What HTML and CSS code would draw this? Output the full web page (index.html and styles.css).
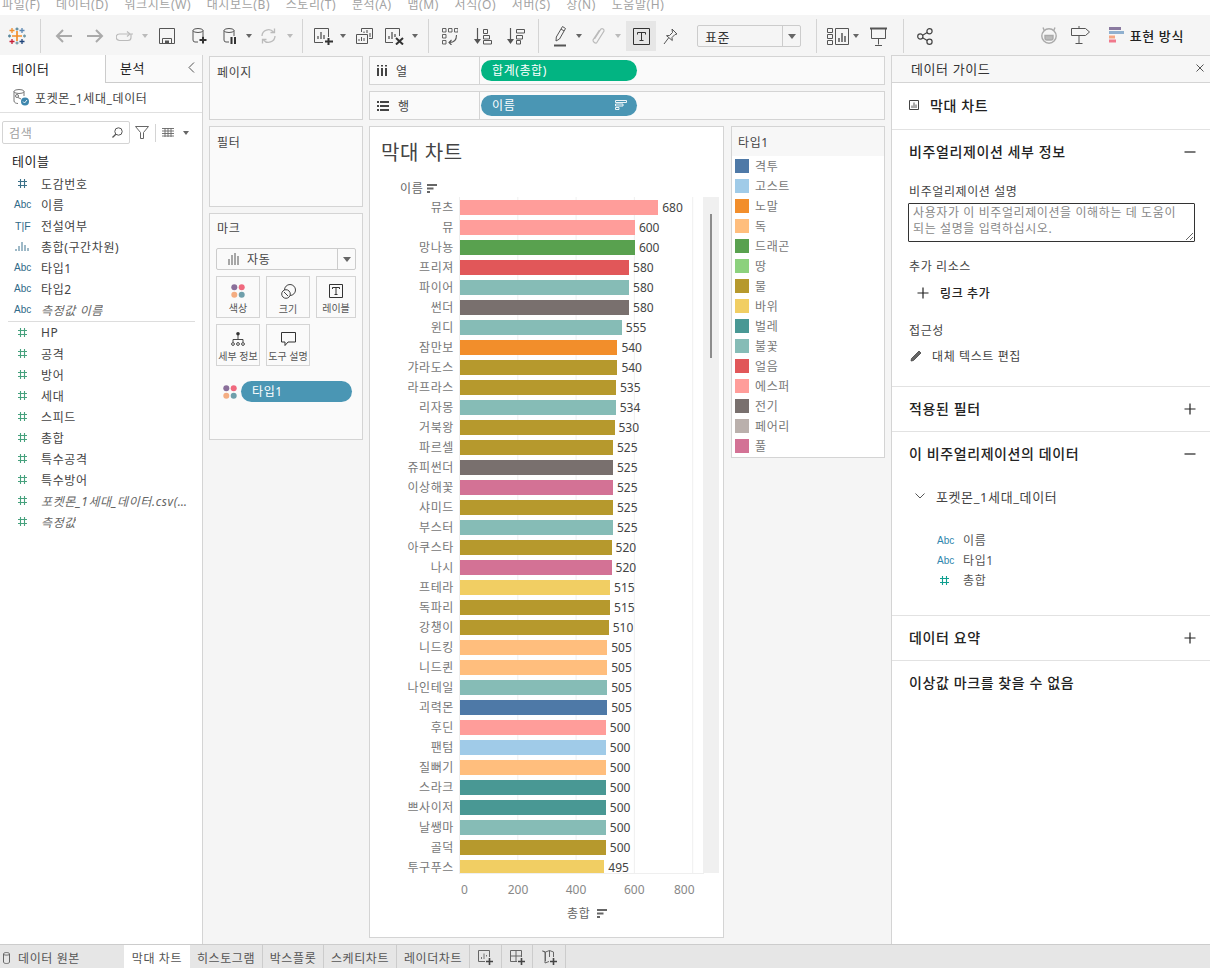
FILE: index.html
```html
<!DOCTYPE html>
<html lang="ko">
<head>
  <meta charset="UTF-8">
  <meta name="viewport" content="width=device-width, initial-scale=1.0">
  <title>막대 차트</title>
  <link rel="stylesheet" href="styles.css">
</head>
<body>
  <svg class="defs" aria-hidden="true">
    <symbol id="i-sort" viewBox="0 0 10 9"><path d="M0 1h10M0 4.500h6.500M0 8h3" fill="none" stroke="currentColor" stroke-width="1.800"/></symbol>
    <symbol id="i-hash" viewBox="0 0 11 11"><path d="M3.500 1v9M7.500 1v9M1 3.500h9M1 7.500h9" fill="none" stroke="currentColor" stroke-width="1.100"/></symbol>
    <symbol id="i-dots" viewBox="0 0 14 14"><circle cx="3.300" cy="3.300" r="3" fill="#8a6f9a"/><circle cx="10.700" cy="3.300" r="3" fill="#f0697e"/><circle cx="3.300" cy="10.700" r="3" fill="#f4ad82"/><circle cx="10.700" cy="10.700" r="3" fill="#6f9fab"/></symbol>
    <symbol id="i-plus" viewBox="0 0 12 12"><path d="M6 .500v11M.500 6h11" fill="none" stroke="currentColor" stroke-width="1.200"/></symbol>
    <symbol id="i-minus" viewBox="0 0 12 12"><path d="M.500 6h11" fill="none" stroke="currentColor" stroke-width="1.200"/></symbol>
  </svg>

  <div class="menubar">
    <span>파일(F)</span><span>데이터(D)</span><span>워크시트(W)</span><span>대시보드(B)</span><span>스토리(T)</span><span>분석(A)</span><span>맵(M)</span><span>서식(O)</span><span>서버(S)</span><span>창(N)</span><span>도움말(H)</span>
  </div>

  <div class="toolbar">
    <div class="tb-group tb-logo">
      <svg width="18" height="18" viewBox="0 0 18 18" fill="none" stroke-width="1.300">
        <path d="M9 4v10M4 9h10" stroke="#f28e2b" stroke-width="1.700"/>
        <path d="M4 1v5M1.500 3.500h5" stroke="#f28e2b"/>
        <path d="M14 1v5M11.500 3.500h5" stroke="#5b87b2"/>
        <path d="M9 .500v3M7.500 2h3" stroke="#59879b"/>
        <path d="M4 12v5M1.500 14.500h5" stroke="#c72037"/>
        <path d="M14 12v5M11.500 14.500h5" stroke="#1f447a"/>
        <path d="M9 14.500v3M7.500 16h3" stroke="#7199a6"/>
        <path d="M1.500 7.500v3M0 9h3" stroke="#59879b"/>
        <path d="M16.500 7.500v3M15 9h3" stroke="#7199a6"/>
      </svg>
    </div>
    <div class="tb-group g-file">
      <span class="tb w32"><svg width="17" height="14" viewBox="0 0 17 14" fill="none" stroke="#aaa" stroke-width="2"><path d="M17 7H2M8 1 2 7l6 6"/></svg></span>
      <span class="tb w32"><svg width="17" height="14" viewBox="0 0 17 14" fill="none" stroke="#aaa" stroke-width="2"><path d="M0 7h15M9 1l6 6-6 6"/></svg></span>
      <span class="tb w28"><svg width="18" height="11" viewBox="0 0 18 11" fill="none" stroke="#bbb" stroke-width="1.200"><path d="M13 3H3.500a2.800 2.800 0 0 0 0 6.500H12a3 3 0 0 0 3-3V3"/><path d="M11 .500 14 3l-3 2.500M11 .500 14 3l3 0" /></svg></span>
      <span class="tb w12"><i class="caret soft"></i></span>
      <span class="tb w32"><svg width="16" height="16" viewBox="0 0 16 16" fill="none" stroke="#555"><path d="M.500.500h15v15H.500z"/><path d="M3.500 15.500v-5h9v5"/><path d="M6 12.500h4v3H6z" fill="#555" stroke="none"/></svg></span>
      <span class="tb w32"><svg width="15" height="16" viewBox="0 0 15 16" fill="none" stroke="#555"><ellipse cx="6" cy="2.500" rx="5" ry="2"/><path d="M1 2.500v9.500a2 2 0 0 0 2 2h3M11 2.500V8"/><path d="M11 8.500v7M7.500 12h7" stroke="#333" stroke-width="2"/></svg></span>
      <span class="tb w30"><svg width="14" height="16" viewBox="0 0 14 16" fill="none" stroke="#555"><ellipse cx="6" cy="2.500" rx="5" ry="2"/><path d="M1 2.500v9.500a2 2 0 0 0 2 2h3M11 2.500V8"/><path d="M8.500 9v7M12 9v7" stroke="#333" stroke-width="2"/></svg></span>
      <span class="tb w8"><i class="caret"></i></span>
      <span class="tb w30"><svg width="17" height="16" viewBox="0 0 17 16" fill="none" stroke="#bbb" stroke-width="1.300"><path d="M2 8a6.500 6.500 0 0 1 11.500-4M15 8A6.500 6.500 0 0 1 3.500 12"/><path d="M14.500.500v4h-4M2.500 15.500v-4h4"/></svg></span>
      <span class="tb w14"><i class="caret soft"></i></span>
    </div>
    <div class="tb-group g-sheet">
      <span class="tb w28"><svg width="19" height="17" viewBox="0 0 19 17" fill="none" stroke="#555"><path d="M9 14.500H.500V.500h14V9"/><path d="M4 11V8M7 11V4M10 11V7" stroke-width="1.300"/><path d="M14.500 10v7M11 13.500h8" stroke="#333" stroke-width="2"/></svg></span>
      <span class="tb w12"><i class="caret"></i></span>
      <span class="tb w31"><svg width="17" height="16" viewBox="0 0 17 16" fill="none" stroke="#555"><path d="M5.500 4V.500h11v10H13"/><path d="M.500 6.500h11v9H.500z" fill="#f5f5f5"/><path d="M8 5V3.500M11 5V2M14 9V5" stroke-width="1.100"/><path d="M3 13v-2M5.500 13V9M8 13v-3" stroke-width="1"/></svg></span>
      <span class="tb w29"><svg width="19" height="17" viewBox="0 0 19 17" fill="none" stroke="#555"><path d="M8 14.500H.500V.500h14V8"/><path d="M4 11V8M7 11V4M10 9V6" stroke-width="1.300"/><path d="m11 10 7 6.500M18 10l-7 6.500" stroke="#333" stroke-width="2"/></svg></span>
      <span class="tb w12"><i class="caret"></i></span>
    </div>
    <div class="tb-group g-sort">
      <span class="tb w30"><svg width="16" height="17" viewBox="0 0 16 17" fill="none" stroke="#555"><path d="M.500.500h3.500v3.500H.500zM6.500.500H10v3.500H6.500zM12.500.500H16v3.500h-3.500zM.500 6.500h3.500V10H.500zM.500 12.500h3.500V16H.500z" stroke-width=".9"/><path d="M14.500 7c0 5-3 7.500-7 7.500M9.500 12l-2.500 2.500 2.500 2.500" stroke-width="1.100"/></svg></span>
      <span class="tb w36"><svg width="18" height="17" viewBox="0 0 18 17" fill="none" stroke="#555"><path d="M3.500 0v14" stroke-width="1.200"/><path d="M0 11h7l-3.500 5z" fill="#555" stroke="none"/><path d="M9.500 1.500h4v4h-4zM9.500 7.500h6v3.500h-6zM9.500 12.500h8v3.500h-8z"/></svg></span>
      <span class="tb w29"><svg width="18" height="17" viewBox="0 0 18 17" fill="none" stroke="#555"><path d="M3.500 0v14" stroke-width="1.200"/><path d="M0 11h7l-3.500 5z" fill="#555" stroke="none"/><path d="M9.500 1.500h8v3.500h-8zM9.500 7.500h6v3.500h-6zM9.500 12.500h4v3.500h-4z"/></svg></span>
    </div>
    <div class="tb-group g-format">
      <span class="tb w30"><svg width="13" height="21" viewBox="0 0 13 21" fill="none" stroke="#555"><path d="m8.500.500 3 2-6 10.500-3.500 2 .3-4z"/><path d="M7 3l3 2" /><path d="M0 19.500h12" stroke="#555" stroke-width="2"/></svg></span>
      <span class="tb w8"><i class="caret"></i></span>
      <span class="tb w30"><svg width="13" height="21" viewBox="0 0 13 21" fill="none" stroke="#bbb" stroke-width="1.200"><path d="M2.500 13 9 3a2 2 0 0 1 3 2L4.500 17a3 3 0 0 1-3.500-3l6.500-10"/></svg></span>
      <span class="tb w10"><i class="caret soft"></i></span>
      <span class="tb w30 is-on"><svg width="17" height="17" viewBox="0 0 17 17" fill="none" stroke="#333"><path d="M.500.500h16v16H.500z"/><path d="M4.500 6.500V4.500h8v2M8.500 4.500v8M6.500 12.500h4"/></svg></span>
      <span class="tb w28"><svg width="15" height="17" viewBox="0 0 15 17" fill="none" stroke="#555"><path d="m9 1 5 5-2 .5-3 3 .3 3L3.500 7.700l3-.2 3-3zM5.500 10 1 16"/></svg></span>
      <div class="tb-select"><span class="tb-select-text">표준</span><span class="tb-select-arrow"><i class="caret large"></i></span></div>
    </div>
    <div class="tb-group g-view">
      <span class="tb w30"><svg width="22" height="19" viewBox="0 0 22 19" fill="none" stroke="#555"><path d="M.500 1.500h5v4h-5zM.500 7.500h5v4h-5zM.500 13.500h5v4h-5z"/><path d="M8.500 1.500h13v16h-13z"/><path d="M12 15v-4M15 15V6M18 15V9" stroke-width="1.500"/></svg></span>
      <span class="tb w6"><i class="caret"></i></span>
      <span class="tb w39"><svg width="17" height="19" viewBox="0 0 17 19" fill="none" stroke="#555"><path d="M0 1.500h17" stroke-width="2"/><path d="M1.500 1.500v10h14v-10M8.500 11.500v6M5 18.500h7"/></svg></span>
    </div>
    <div class="tb-group g-share">
      <span class="tb w30"><svg width="16" height="17" viewBox="0 0 16 17" fill="none" stroke="#444" stroke-width="1.200"><circle cx="12.500" cy="3.300" r="2.600"/><circle cx="3.300" cy="8.500" r="2.600"/><circle cx="12.500" cy="13.700" r="2.600"/><path d="m5.600 7.200 4.600-2.600M5.600 9.800l4.600 2.600"/></svg></span>
    </div>
    <div class="tb-right">
      <svg class="tb-cat" width="18" height="18" viewBox="0 0 18 18" fill="none" stroke="#aaa" stroke-width="1.400"><path d="M3 1.500 4.500 5M15 1.500 13.500 5"/><circle cx="9" cy="10" r="7.200"/><path d="M5 9.500h8v2.500a2 2 0 0 1-2 2H7a2 2 0 0 1-2-2z" fill="#bbb"/></svg>
      <svg class="tb-sign" width="19" height="18" viewBox="0 0 19 18" fill="none" stroke="#555"><path d="M.500 2.500h14l4 3.500-4 3.500H.500zM8 9.500V17M4.500 17.500h7M8 0v2.500"/></svg>
      <svg class="tb-showme" width="15" height="16" viewBox="0 0 15 16"><path fill="#8a7aa0" d="M0 0h12v3H0z"/><path fill="#8fb0cf" d="M0 4h15v3H0z"/><path fill="#f4a582" d="M0 8.500h6v3H0z"/><path fill="#f0788c" d="M0 12.500h7v3H0z"/></svg>
      <span class="tb-showme-text">표현 방식</span>
    </div>
  </div>

  <div class="main">
    <aside class="data-pane">
      <div class="data-tabs">
        <div class="data-tab is-active">데이터</div>
        <div class="data-tab">분석<svg class="collapse" width="7" height="11" viewBox="0 0 7 11" fill="none" stroke="#555"><path d="M6 .500 1 5.500l5 5"/></svg></div>
      </div>
      <div class="source-row">
        <svg width="16" height="17" viewBox="0 0 16 17" fill="none" stroke="#666" stroke-width=".9"><ellipse cx="6" cy="2.500" rx="5" ry="2"/><path d="M1 2.500V12c0 1.500 2 2.500 4 2.500M11 2.500V7"/><circle cx="4" cy="7" r="1.500"/><path d="M5 8.500 8 10"/><circle cx="12" cy="12.500" r="4" fill="#3d86ad" stroke="none"/><path d="m10 12.500 1.500 1.500 2.500-3" stroke="#fff"/></svg>
        <span>포켓몬_1세대_데이터</span>
      </div>
      <div class="search-row">
        <div class="search-box"><span>검색</span><svg width="11" height="11" viewBox="0 0 11 11" fill="none" stroke="#555"><circle cx="6.500" cy="4.500" r="3.700"/><path d="M3.800 7.200.500 10.500" stroke-width="1.300"/></svg></div>
        <svg class="search-filter" width="14" height="13" viewBox="0 0 14 13" fill="none" stroke="#666"><path d="M.500.500h13L8.500 6.500v6h-3v-6z"/></svg>
        <span class="search-sep"></span>
        <svg class="search-list" width="12" height="9" viewBox="0 0 12 9" fill="none" stroke="#666"><path d="M0 .500h12M0 3h12M0 5.500h12M0 8h12M3 0v9M6 0v9M9 0v9" stroke-width=".9"/></svg>
        <i class="caret search-caret"></i>
      </div>
      <div class="field-title">테이블</div>
      <ul class="field-list">
        <li class="field"><svg class="field-hash dim"><use href="#i-hash"/></svg><span>도감번호</span></li>
        <li class="field"><b class="abc">Abc</b><span>이름</span></li>
        <li class="field"><b class="abc tf">T|F</b><span>전설여부</span></li>
        <li class="field"><svg class="field-bins" width="14" height="9" viewBox="0 0 14 9" fill="none" stroke="#3f7590"><path d="M1 9V7M4 9V4M7 9V0M10 9V3M13 9V6"/></svg><span>총합(구간차원)</span></li>
        <li class="field"><b class="abc">Abc</b><span>타입1</span></li>
        <li class="field"><b class="abc">Abc</b><span>타입2</span></li>
        <li class="field is-calc"><b class="abc">Abc</b><span>측정값 이름</span></li>
      </ul>
      <div class="field-divider"></div>
      <ul class="field-list">
        <li class="field"><svg class="field-hash"><use href="#i-hash"/></svg><span>HP</span></li>
        <li class="field"><svg class="field-hash"><use href="#i-hash"/></svg><span>공격</span></li>
        <li class="field"><svg class="field-hash"><use href="#i-hash"/></svg><span>방어</span></li>
        <li class="field"><svg class="field-hash"><use href="#i-hash"/></svg><span>세대</span></li>
        <li class="field"><svg class="field-hash"><use href="#i-hash"/></svg><span>스피드</span></li>
        <li class="field"><svg class="field-hash"><use href="#i-hash"/></svg><span>총합</span></li>
        <li class="field"><svg class="field-hash"><use href="#i-hash"/></svg><span>특수공격</span></li>
        <li class="field"><svg class="field-hash"><use href="#i-hash"/></svg><span>특수방어</span></li>
        <li class="field is-calc"><svg class="field-hash"><use href="#i-hash"/></svg><span>포켓몬_1세대_데이터.csv(카운트)</span></li>
        <li class="field is-calc"><svg class="field-hash"><use href="#i-hash"/></svg><span>측정값</span></li>
      </ul>
    </aside>

    <section class="cards">
      <div class="card card-pages"><div class="card-title">페이지</div></div>
      <div class="card card-filters"><div class="card-title">필터</div></div>
      <div class="card card-marks">
        <div class="card-title">마크</div>
        <div class="mark-select">
          <svg width="11" height="12" viewBox="0 0 11 12" fill="none" stroke="#555"><path d="M1 12V6M4 12V2M7 12V0M10 12V3"/></svg>
          <span>자동</span>
          <span class="mark-select-arrow"><i class="caret large"></i></span>
        </div>
        <div class="mark-grid">
          <div class="mark-btn"><svg width="14" height="14"><use href="#i-dots"/></svg><span>색상</span></div>
          <div class="mark-btn"><svg width="15" height="15" viewBox="0 0 15 15" fill="none" stroke="#444"><circle cx="9" cy="6" r="5.500"/><circle cx="5" cy="10" r="4.300" fill="#fafafa"/><path d="m3 8 4 4"/></svg><span>크기</span></div>
          <div class="mark-btn"><svg width="14" height="14" viewBox="0 0 14 14" fill="none" stroke="#333"><path d="M.500.500h13v13H.500z"/><path d="M3.500 5V3.500h7V5M7 3.500v7M5.500 10.500h3"/></svg><span>레이블</span></div>
          <div class="mark-btn"><svg width="14" height="14" viewBox="0 0 14 14" fill="none" stroke="#444"><circle cx="7" cy="1.800" r="1.800" fill="#333" stroke="none"/><path d="M7 3v5M2 10V7.500h10V10"/><circle cx="2" cy="12" r="1.400"/><circle cx="7" cy="12" r="1.400"/><circle cx="12" cy="12" r="1.400"/></svg><span>세부 정보</span></div>
          <div class="mark-btn"><svg width="15" height="14" viewBox="0 0 15 14" fill="none" stroke="#333"><path d="M.500.500h14v9.500H7L4 13.500V10H.500z"/></svg><span>도구 설명</span></div>
        </div>
        <div class="mark-field">
          <svg width="14" height="14"><use href="#i-dots"/></svg>
          <div class="pill pill-dim">타입1</div>
        </div>
      </div>
    </section>

    <section class="workspace">
      <div class="shelf">
        <div class="shelf-label"><svg width="10" height="11" viewBox="0 0 10 11" fill="#444"><path d="M0 3h2v8H0zM4 3h2v8H4zM8 3h2v8H8zM0 0h2v1.500H0zM4 0h2v1.500H4zM8 0h2v1.500H8z"/></svg><span>열</span></div>
        <div class="shelf-body"><div class="pill pill-measure">합계(총합)</div></div>
      </div>
      <div class="shelf">
        <div class="shelf-label"><svg width="12" height="10" viewBox="0 0 12 10" fill="#444"><path d="M0 0h2v2H0zM3 0h9v2H3zM0 4h2v2H0zM3 4h9v2H3zM0 8h2v2H0zM3 8h9v2H3z"/></svg><span>행</span></div>
        <div class="shelf-body">
          <div class="pill pill-dim pill-sorted">이름<svg width="12" height="10" viewBox="0 0 12 10" fill="none" stroke="#fff" stroke-width=".9"><path d="M.500.500h11v2H.500zM.500 4h7.500v2H.500zM.500 7.500H4v2H.500z"/></svg></div>
        </div>
      </div>

      <div class="canvas">
        <div class="viz">
          <h1 class="viz-title">막대 차트</h1>
          <div class="rows-head">이름<svg width="10" height="9"><use href="#i-sort"/></svg></div>
          <div class="plot">
            <div class="plot-rows">
              <div class="row"><div class="row-name">뮤츠</div><div class="row-cell"><div class="bar t-psychic" style="width:198.2px"></div><span class="bar-value">680</span></div></div>
              <div class="row"><div class="row-name">뮤</div><div class="row-cell"><div class="bar t-psychic" style="width:174.9px"></div><span class="bar-value">600</span></div></div>
              <div class="row"><div class="row-name">망나뇽</div><div class="row-cell"><div class="bar t-dragon" style="width:174.9px"></div><span class="bar-value">600</span></div></div>
              <div class="row"><div class="row-name">프리져</div><div class="row-cell"><div class="bar t-ice" style="width:169.1px"></div><span class="bar-value">580</span></div></div>
              <div class="row"><div class="row-name">파이어</div><div class="row-cell"><div class="bar t-fire" style="width:169.1px"></div><span class="bar-value">580</span></div></div>
              <div class="row"><div class="row-name">썬더</div><div class="row-cell"><div class="bar t-electric" style="width:169.1px"></div><span class="bar-value">580</span></div></div>
              <div class="row"><div class="row-name">윈디</div><div class="row-cell"><div class="bar t-fire" style="width:161.8px"></div><span class="bar-value">555</span></div></div>
              <div class="row"><div class="row-name">잠만보</div><div class="row-cell"><div class="bar t-normal" style="width:157.4px"></div><span class="bar-value">540</span></div></div>
              <div class="row"><div class="row-name">갸라도스</div><div class="row-cell"><div class="bar t-water" style="width:157.4px"></div><span class="bar-value">540</span></div></div>
              <div class="row"><div class="row-name">라프라스</div><div class="row-cell"><div class="bar t-water" style="width:156px"></div><span class="bar-value">535</span></div></div>
              <div class="row"><div class="row-name">리자몽</div><div class="row-cell"><div class="bar t-fire" style="width:155.7px"></div><span class="bar-value">534</span></div></div>
              <div class="row"><div class="row-name">거북왕</div><div class="row-cell"><div class="bar t-water" style="width:154.5px"></div><span class="bar-value">530</span></div></div>
              <div class="row"><div class="row-name">파르셀</div><div class="row-cell"><div class="bar t-water" style="width:153px"></div><span class="bar-value">525</span></div></div>
              <div class="row"><div class="row-name">쥬피썬더</div><div class="row-cell"><div class="bar t-electric" style="width:153px"></div><span class="bar-value">525</span></div></div>
              <div class="row"><div class="row-name">이상해꽃</div><div class="row-cell"><div class="bar t-grass" style="width:153px"></div><span class="bar-value">525</span></div></div>
              <div class="row"><div class="row-name">샤미드</div><div class="row-cell"><div class="bar t-water" style="width:153px"></div><span class="bar-value">525</span></div></div>
              <div class="row"><div class="row-name">부스터</div><div class="row-cell"><div class="bar t-fire" style="width:153px"></div><span class="bar-value">525</span></div></div>
              <div class="row"><div class="row-name">아쿠스타</div><div class="row-cell"><div class="bar t-water" style="width:151.6px"></div><span class="bar-value">520</span></div></div>
              <div class="row"><div class="row-name">나시</div><div class="row-cell"><div class="bar t-grass" style="width:151.6px"></div><span class="bar-value">520</span></div></div>
              <div class="row"><div class="row-name">프테라</div><div class="row-cell"><div class="bar t-rock" style="width:150.1px"></div><span class="bar-value">515</span></div></div>
              <div class="row"><div class="row-name">독파리</div><div class="row-cell"><div class="bar t-water" style="width:150.1px"></div><span class="bar-value">515</span></div></div>
              <div class="row"><div class="row-name">강챙이</div><div class="row-cell"><div class="bar t-water" style="width:148.7px"></div><span class="bar-value">510</span></div></div>
              <div class="row"><div class="row-name">니드킹</div><div class="row-cell"><div class="bar t-poison" style="width:147.2px"></div><span class="bar-value">505</span></div></div>
              <div class="row"><div class="row-name">니드퀸</div><div class="row-cell"><div class="bar t-poison" style="width:147.2px"></div><span class="bar-value">505</span></div></div>
              <div class="row"><div class="row-name">나인테일</div><div class="row-cell"><div class="bar t-fire" style="width:147.2px"></div><span class="bar-value">505</span></div></div>
              <div class="row"><div class="row-name">괴력몬</div><div class="row-cell"><div class="bar t-fight" style="width:147.2px"></div><span class="bar-value">505</span></div></div>
              <div class="row"><div class="row-name">후딘</div><div class="row-cell"><div class="bar t-psychic" style="width:145.8px"></div><span class="bar-value">500</span></div></div>
              <div class="row"><div class="row-name">팬텀</div><div class="row-cell"><div class="bar t-ghost" style="width:145.8px"></div><span class="bar-value">500</span></div></div>
              <div class="row"><div class="row-name">질뻐기</div><div class="row-cell"><div class="bar t-poison" style="width:145.8px"></div><span class="bar-value">500</span></div></div>
              <div class="row"><div class="row-name">스라크</div><div class="row-cell"><div class="bar t-bug" style="width:145.8px"></div><span class="bar-value">500</span></div></div>
              <div class="row"><div class="row-name">쁘사이저</div><div class="row-cell"><div class="bar t-bug" style="width:145.8px"></div><span class="bar-value">500</span></div></div>
              <div class="row"><div class="row-name">날쌩마</div><div class="row-cell"><div class="bar t-fire" style="width:145.8px"></div><span class="bar-value">500</span></div></div>
              <div class="row"><div class="row-name">골덕</div><div class="row-cell"><div class="bar t-water" style="width:145.8px"></div><span class="bar-value">500</span></div></div>
              <div class="row"><div class="row-name">투구푸스</div><div class="row-cell"><div class="bar t-rock" style="width:144.3px"></div><span class="bar-value">495</span></div></div>
            </div>
            <div class="plot-scroll"><div class="plot-thumb"></div></div>
          </div>
          <div class="axis">
            <span>0</span><span>200</span><span>400</span><span>600</span><span>800</span>
          </div>
          <div class="axis-title">총합<svg width="10" height="9"><use href="#i-sort"/></svg></div>
        </div>

        <div class="legend">
          <div class="legend-title">타입1</div>
          <div class="legend-item"><i class="t-fight"></i>격투</div>
          <div class="legend-item"><i class="t-ghost"></i>고스트</div>
          <div class="legend-item"><i class="t-normal"></i>노말</div>
          <div class="legend-item"><i class="t-poison"></i>독</div>
          <div class="legend-item"><i class="t-dragon"></i>드래곤</div>
          <div class="legend-item"><i class="t-ground"></i>땅</div>
          <div class="legend-item"><i class="t-water"></i>물</div>
          <div class="legend-item"><i class="t-rock"></i>바위</div>
          <div class="legend-item"><i class="t-bug"></i>벌레</div>
          <div class="legend-item"><i class="t-fire"></i>불꽃</div>
          <div class="legend-item"><i class="t-ice"></i>얼음</div>
          <div class="legend-item"><i class="t-psychic"></i>에스퍼</div>
          <div class="legend-item"><i class="t-electric"></i>전기</div>
          <div class="legend-item"><i class="t-fairy"></i>페어리</div>
          <div class="legend-item"><i class="t-grass"></i>풀</div>
        </div>
      </div>
    </section>

    <aside class="guide">
      <div class="guide-head">데이터 가이드<svg width="8" height="8" viewBox="0 0 8 8" fill="none" stroke="#555"><path d="m.500.500 7 7M7.500.500l-7 7"/></svg></div>
      <div class="guide-sec sec-type">
        <svg width="10" height="10" viewBox="0 0 10 10" fill="none" stroke="#444"><path d="M.500.500h9v9h-9z"/><path d="M3 8V5.500M5 8V2.500M7 8V4.500" stroke-width=".9"/></svg>
        <span>막대 차트</span>
      </div>
      <div class="guide-sec sec-details">
        <div class="guide-h">비주얼리제이션 세부 정보<svg width="12" height="12"><use href="#i-minus"/></svg></div>
        <div class="guide-label first">비주얼리제이션 설명</div>
        <textarea class="guide-input" placeholder="사용자가 이 비주얼리제이션을 이해하는 데 도움이 되는 설명을 입력하십시오."></textarea>
        <div class="guide-label res">추가 리소스</div>
        <div class="guide-link"><svg width="12" height="12"><use href="#i-plus"/></svg>링크 추가</div>
        <div class="guide-label access">접근성</div>
        <div class="guide-edit"><svg width="12" height="12" viewBox="0 0 12 12" fill="#666" stroke="#444" stroke-width=".8"><path d="M9 1 11 3 3.500 10.500 1 11 1.500 8.500z"/></svg>대체 텍스트 편집</div>
      </div>
      <div class="guide-sec sec-short">
        <div class="guide-h">적용된 필터<svg width="12" height="12"><use href="#i-plus"/></svg></div>
      </div>
      <div class="guide-sec sec-data">
        <div class="guide-h">이 비주얼리제이션의 데이터<svg width="12" height="12"><use href="#i-minus"/></svg></div>
        <div class="guide-source"><svg width="10" height="6" viewBox="0 0 10 6" fill="none" stroke="#555"><path d="m.500.500 4.500 4.500 4.500-4.500"/></svg>포켓몬_1세대_데이터</div>
        <ul class="guide-fields">
          <li><b class="abc bright">Abc</b>이름</li>
          <li><b class="abc bright">Abc</b>타입1</li>
          <li><svg class="guide-hash" width="11" height="11"><use href="#i-hash"/></svg>총합</li>
        </ul>
      </div>
      <div class="guide-sec sec-short">
        <div class="guide-h">데이터 요약<svg width="12" height="12"><use href="#i-plus"/></svg></div>
      </div>
      <div class="guide-sec sec-last">
        <div class="guide-h">이상값 마크를 찾을 수 없음</div>
      </div>
    </aside>
  </div>

  <div class="tabbar">
    <div class="tab-source"><svg width="7" height="12" viewBox="0 0 7 12" fill="none" stroke="#666"><path d="M.500 2c0-2 6-2 6 0v8c0 2-6 2-6 0zM.500 2c0 1.500 6 1.500 6 0"/></svg>데이터 원본</div>
    <div class="tab-sheets">
      <div class="sheet-tab is-active">막대 차트</div>
      <div class="sheet-tab">히스토그램</div>
      <div class="sheet-tab">박스플롯</div>
      <div class="sheet-tab">스케티차트</div>
      <div class="sheet-tab">레이더차트</div>
      <div class="sheet-tab"><svg width="15" height="15" viewBox="0 0 15 15" fill="none" stroke="#666"><path d="M7 11.500H.500V.500h11V7"/><path d="M3.500 9V7M6 9V3.500M8.500 6.500V5" stroke-width=".9"/><path d="M11.500 8v7M8 11.500h7" stroke="#444" stroke-width="1.600"/></svg></div>
      <div class="sheet-tab"><svg width="15" height="15" viewBox="0 0 15 15" fill="none" stroke="#666"><path d="M7 11.500H.500V.500h11V7M.500 6h11M6 .500v11"/><path d="M11.500 8v7M8 11.500h7" stroke="#444" stroke-width="1.600"/></svg></div>
      <div class="sheet-tab"><svg width="15" height="15" viewBox="0 0 15 15" fill="none" stroke="#666"><path d="M7 11.500 3 13V2L.500 1l3 1 4-1.500 4 1.500V7M3.500 2v9M7.500.500V7"/><path d="M11.500 8v7M8 11.500h7" stroke="#444" stroke-width="1.600"/></svg></div>
    </div>
  </div>
</body>
</html>
```

FILE: styles.css
```css
* {
  box-sizing: border-box;
}
html, body {
  margin: 0;
  height: 100%;
}
body {
  display: flex;
  flex-direction: column;
  height: 968px;
  overflow: hidden;
  background: #f5f5f5;
  color: #444;
  font-family: "Noto Sans", "Noto Sans CJK KR", sans-serif;
  font-size: 12px;
  letter-spacing: .6px;
}
ul {
  list-style: none;
  margin: 0;
  padding: 0;
}
.defs {
  display: none;
}
.caret {
  display: block;
  width: 0;
  height: 0;
  border-left: 3px solid transparent;
  border-right: 3px solid transparent;
  border-top: 4px solid #666;
}
.caret.soft {
  border-top-color: #bbb;
}
.caret.large {
  border-left-width: 4px;
  border-right-width: 4px;
  border-top-width: 5px;
}

/* top menu, clipped by the window edge */
.menubar {
  display: flex;
  align-items: flex-end;
  gap: 15.600px;
  flex: 0 0 15px;
  padding-left: 2px;
  overflow: hidden;
  background: #fff;
  color: #a3a3a3;
  line-height: 20px;
}
.menubar span {
  flex: none;
}

.toolbar {
  display: flex;
  flex: 0 0 40px;
  align-items: center;
  background: #f5f5f5;
}
.tb-group {
  display: flex;
  align-items: center;
  flex: none;
  height: 34px;
  margin-top: 2px;
  border-right: 1px solid #d4d4d4;
}
.tb-logo {
  width: 41px;
  padding-left: 8px;
}
.g-file {
  width: 262px;
  padding-left: 6px;
}
.g-sheet {
  width: 126px;
  padding-left: 6px;
}
.g-sort {
  width: 110px;
  padding-left: 6px;
}
.g-format {
  width: 278px;
  padding-left: 6px;
}
.g-view {
  width: 87px;
  padding-left: 6px;
}
.g-share {
  border-right: 0;
  padding-left: 6px;
}
.tb {
  display: flex;
  align-items: center;
  justify-content: center;
  flex: none;
  height: 30px;
}
.w6 { width: 6px; }
.w8 { width: 8px; }
.w10 { width: 10px; }
.w12 { width: 12px; }
.w14 { width: 14px; }
.w28 { width: 28px; }
.w29 { width: 29px; }
.w30 { width: 30px; }
.w31 { width: 31px; }
.w32 { width: 32px; }
.w36 { width: 36px; }
.w39 { width: 39px; }
.tb.is-on {
  margin-left: 3px;
  background: #e6e6e6;
}
.tb-select {
  display: flex;
  align-items: center;
  width: 104px;
  height: 22px;
  margin-left: 13px;
  background: #f5f5f5;
  border: 1px solid #ccc;
  border-radius: 2px;
}
.tb-select-text {
  flex: 1;
  padding-left: 7px;
  color: #333;
  font-size: 13px;
}
.tb-select-arrow {
  display: flex;
  align-items: center;
  justify-content: center;
  width: 18px;
  height: 100%;
  border-left: 1px solid #ccc;
}
.tb-right {
  display: flex;
  align-items: center;
  margin-left: auto;
  padding-right: 26px;
}
.tb-sign {
  margin-left: 13px;
}
.tb-showme {
  margin-left: 19px;
}
.tb-showme-text {
  margin-left: 6px;
  color: #222;
  font-size: 13px;
  font-weight: 500;
}

.main {
  display: grid;
  grid-template-columns: 203px 166px 522px 319px;
  flex: 1;
  min-height: 0;
}

/* left data pane */
.data-pane {
  background: #fff;
  border-right: 1px solid #d4d4d4;
  min-width: 0;
}
.data-tabs {
  display: flex;
  height: 28px;
}
.data-tab {
  display: flex;
  align-items: center;
  width: 105px;
  padding: 0 0 2px 12px;
  color: #222;
  font-size: 13px;
}
.data-tab + .data-tab {
  flex: 1;
  padding-left: 14px;
  background: #fafafa;
  border-left: 1px solid #ccc;
  border-bottom: 1px solid #ccc;
}
.collapse {
  margin-left: auto;
  margin-right: 7px;
}
.source-row {
  display: flex;
  align-items: center;
  gap: 6px;
  height: 30px;
  padding-left: 13px;
  border-bottom: 1px solid #e0e0e0;
  color: #444;
}
.search-row {
  display: flex;
  align-items: center;
  height: 23px;
  margin-top: 8px;
  padding-left: 2px;
}
.search-box {
  display: flex;
  align-items: center;
  justify-content: space-between;
  width: 128px;
  height: 23px;
  padding: 0 6px;
  border: 1px solid #d4d4d4;
  border-radius: 2px;
  color: #a0a0a0;
}
.search-filter {
  margin-left: 5px;
}
.search-sep {
  width: 1px;
  height: 18px;
  margin-left: 6px;
  background: #d4d4d4;
}
.search-list {
  margin-left: 6px;
}
.search-caret {
  margin-left: 9px;
}
.field-title {
  height: 20px;
  margin-top: 7px;
  padding-left: 12px;
  color: #222;
  font-size: 13px;
  line-height: 20px;
}
.field-list {
  margin-top: 2px;
}
.field-divider + .field-list {
  margin-top: 0;
}
.field {
  display: flex;
  align-items: center;
  height: 21px;
  padding-right: 8px;
  color: #444;
}
.field span {
  overflow: hidden;
  white-space: nowrap;
  text-overflow: ellipsis;
}
.field.is-calc span {
  color: #666;
  font-style: italic;
}
.field-hash {
  flex: none;
  width: 11px;
  height: 11px;
  margin: 0 13px 0 17px;
  color: #46a17d;
}
.field-hash.dim {
  color: #3a7088;
}
.field-bins {
  flex: none;
  margin: 0 12px 0 15px;
}
.abc {
  flex: none;
  width: 41px;
  padding-left: 14px;
  color: #2f6a88;
  font-family: "Liberation Sans", sans-serif;
  font-size: 10px;
  font-weight: 400;
  letter-spacing: 0;
}
.abc.tf {
  padding-left: 15px;
  font-size: 10.500px;
}
.field-divider {
  height: 1px;
  margin: 1px 7px 0 8px;
  background: #ddd;
}

/* pages, filters, marks */
.cards {
  display: flex;
  flex-direction: column;
  gap: 6px;
  padding: 1px 6px 0;
}
.card {
  background: #fafafa;
  border: 1px solid #d4d4d4;
  padding: 7px 7px 0;
}
.card-title {
  color: #444;
  line-height: 16px;
}
.card-pages {
  height: 64px;
  padding-top: 8px;
}
.card-filters {
  height: 81px;
  padding-top: 8px;
}
.card-marks {
  height: 227px;
}
.mark-select {
  display: flex;
  align-items: center;
  height: 22px;
  margin: 11px -1px 0 -1px;
  padding-left: 11px;
  background: #fafafa;
  border: 1px solid #ccc;
  border-radius: 2px;
  color: #444;
}
.mark-select span:first-of-type {
  margin-left: 8px;
}
.mark-select-arrow {
  display: flex;
  align-items: center;
  justify-content: center;
  width: 18px;
  height: 100%;
  margin-left: auto;
  border-left: 1px solid #ccc;
}
.mark-grid {
  display: grid;
  grid-template-columns: 44px 44px 40px;
  grid-auto-rows: 42px;
  gap: 6px;
  margin: 6px 0 0 -1px;
}
.mark-btn {
  display: flex;
  flex-direction: column;
  align-items: center;
  padding-top: 7px;
  background: #fafafa;
  border: 1px solid #d4d4d4;
  color: #555;
  font-size: 10px;
  letter-spacing: 0;
  white-space: nowrap;
}
.mark-btn span {
  margin-top: 3px;
  line-height: 14px;
}
.mark-field {
  display: flex;
  align-items: center;
  gap: 4px;
  margin: 15px 3px 0 6px;
}
.mark-field .pill {
  flex: 1;
}
.pill {
  display: flex;
  align-items: center;
  height: 21px;
  padding: 0 0 2px 11px;
  border-radius: 11px;
  color: #fff;
}
.pill-dim {
  background: #4a96b4;
}
.pill-measure {
  background: #02b482;
}
.pill-sorted {
  justify-content: space-between;
  padding-right: 10px;
}

/* shelves and canvas */
.workspace {
  padding: 1px 6px 0 0;
  min-width: 0;
}
.shelf {
  display: flex;
  height: 29px;
  margin-bottom: 6px;
  background: #fafafa;
  border: 1px solid #d4d4d4;
}
.shelf-label {
  display: flex;
  align-items: center;
  gap: 9px;
  width: 110px;
  padding-left: 7px;
  border-right: 1px solid #d4d4d4;
}
.shelf-body {
  flex: 1;
  padding: 3px 0 0 1px;
}
.shelf-body .pill {
  width: 156px;
}
.canvas {
  display: flex;
  align-items: flex-start;
  gap: 7px;
}
.viz {
  width: 355px;
  height: 812px;
  background: #fff;
  border: 1px solid #d4d4d4;
}
.viz-title {
  height: 24px;
  margin: 14px 0 0 11px;
  color: #444;
  font-size: 20px;
  font-weight: 400;
  line-height: 24px;
}
.rows-head {
  display: flex;
  align-items: center;
  gap: 4px;
  height: 16px;
  margin: 15px 0 0 30px;
  color: #666;
}
.plot {
  display: flex;
  height: 676px;
  margin-top: 1px;
  overflow: hidden;
}
.plot-rows {
  flex: none;
  width: 333px;
}
.row {
  display: flex;
  height: 20px;
}
.row-name {
  flex: none;
  width: 89px;
  padding: 3px 5px 0 0;
  color: #777;
  line-height: 15px;
  text-align: right;
}
.row-cell {
  display: flex;
  align-items: flex-start;
  width: 240px;
  background-image: linear-gradient(to right, #efefef 1px, transparent 1px);
  background-size: 58.300px 100%;
}
.bar {
  flex: none;
  height: 15px;
  margin: 3px 4px 0 1px;
}
.bar-value {
  padding-top: 3px;
  color: #444;
  line-height: 15px;
  letter-spacing: 0;
  white-space: nowrap;
}
.plot-scroll {
  flex: none;
  width: 16px;
  height: 100%;
  background: #f0f0f0;
}
.plot-thumb {
  width: 2px;
  height: 144px;
  margin: 17px 0 0 7px;
  background: #8c8c8c;
}
.axis {
  display: flex;
  width: 245px;
  height: 31px;
  margin-left: 89px;
  padding: 8px 0 0 2px;
  border-top: 1px solid #efefef;
  color: #888;
  letter-spacing: 0;
  line-height: 16px;
}
.axis span:nth-child(1) { width: 46.700px; }
.axis span:nth-child(2) { width: 58px; }
.axis span:nth-child(3) { width: 58.300px; }
.axis span:nth-child(4) { width: 50px; }
.axis-title {
  display: flex;
  align-items: center;
  gap: 7px;
  height: 16px;
  margin: 1px 0 0 197px;
  color: #666;
}
.legend {
  width: 154px;
  height: 332px;
  background: #fff;
  border: 1px solid #d4d4d4;
}
.legend-title {
  display: flex;
  align-items: center;
  height: 29px;
  padding-left: 6px;
  background: #f7f7f7;
  color: #444;
}
.legend-item {
  display: flex;
  align-items: center;
  gap: 6px;
  height: 20px;
  padding-left: 3px;
  color: #777;
}
.legend-item i {
  flex: none;
  width: 14px;
  height: 14px;
}
.t-fight { background: #4e79a7; }
.t-ghost { background: #a0cbe8; }
.t-normal { background: #f28e2b; }
.t-poison { background: #ffbe7d; }
.t-dragon { background: #59a14f; }
.t-ground { background: #8cd17d; }
.t-water { background: #b6992d; }
.t-rock { background: #f1ce63; }
.t-bug { background: #499894; }
.t-fire { background: #86bcb6; }
.t-ice { background: #e15759; }
.t-psychic { background: #ff9d9a; }
.t-electric { background: #79706e; }
.t-fairy { background: #bab0ac; }
.t-grass { background: #d37295; }

/* data guide */
.guide {
  background: #fff;
  border-left: 1px solid #d4d4d4;
}
.guide-head {
  display: flex;
  align-items: center;
  justify-content: space-between;
  height: 28px;
  padding: 0 6px 2px 19px;
  background: #f7f7f7;
  border-top: 1px solid #d4d4d4;
  border-bottom: 1px solid #d4d4d4;
  color: #333;
  font-size: 13px;
}
.guide-sec {
  padding: 12px 14px 0 17px;
  border-bottom: 1px solid #e2e2e2;
}
.guide-h {
  display: flex;
  align-items: center;
  justify-content: space-between;
  height: 20px;
  color: #222;
  font-size: 14px;
  font-weight: 500;
  line-height: 20px;
}
.sec-type {
  display: flex;
  align-items: center;
  gap: 11px;
  height: 47px;
  padding: 0 0 2px 17px;
  color: #222;
  font-size: 14px;
  font-weight: 500;
}
.sec-details {
  height: 257px;
}
.sec-short {
  height: 45px;
}
.sec-data {
  height: 184px;
}
.sec-last {
  border-bottom: 0;
}
.guide-label {
  height: 20px;
  color: #444;
  line-height: 20px;
}
.guide-label.first {
  margin-top: 20px;
}
.guide-label.res {
  margin-top: 15px;
}
.guide-label.access {
  margin-top: 18px;
}
.guide-input {
  display: block;
  width: 287px;
  height: 39px;
  margin: 1px 0 0 -1px;
  padding: 1px 4px;
  border: 1px solid #333;
  border-radius: 1px;
  background: #fff;
  color: #444;
  font: inherit;
  letter-spacing: .6px;
  line-height: 16px;
  overflow: hidden;
}
.guide-input::placeholder {
  color: #888;
  opacity: 1;
}
.guide-link {
  display: flex;
  align-items: center;
  gap: 11px;
  height: 20px;
  margin: 6px 0 0 8px;
  color: #222;
  font-weight: 500;
}
.guide-edit {
  display: flex;
  align-items: center;
  gap: 10px;
  height: 20px;
  margin: 5px 0 0 1px;
  color: #444;
}
.guide-source {
  display: flex;
  align-items: center;
  gap: 11px;
  height: 20px;
  margin: 22px 0 0 6px;
  color: #444;
  font-size: 13px;
}
.guide-fields {
  margin: 24px 0 0 28px;
}
.guide-fields li {
  display: flex;
  align-items: center;
  height: 20px;
  color: #555;
}
.abc.bright {
  width: 26px;
  padding-left: 0;
  color: #2f86ad;
}
.guide-hash {
  margin: 0 13px 0 2px;
  color: #0f9f8f;
}

/* bottom sheet tabs */
.tabbar {
  display: flex;
  flex: 0 0 24px;
  background: #e6e6e6;
  border-top: 1px solid #ccc;
}
.tab-source {
  display: flex;
  align-items: center;
  gap: 8px;
  width: 124px;
  padding: 2px 0 0 3px;
  color: #555;
}
.tab-sheets {
  display: grid;
  grid-template-columns: 66px 73px 61px 73px 73px 32px 31px 33px;
}
.sheet-tab {
  display: flex;
  align-items: center;
  justify-content: center;
  padding-top: 2px;
  border-right: 1px solid #ccc;
  color: #555;
  white-space: nowrap;
}
.sheet-tab.is-active {
  background: #fff;
  border-right: 0;
}
```
